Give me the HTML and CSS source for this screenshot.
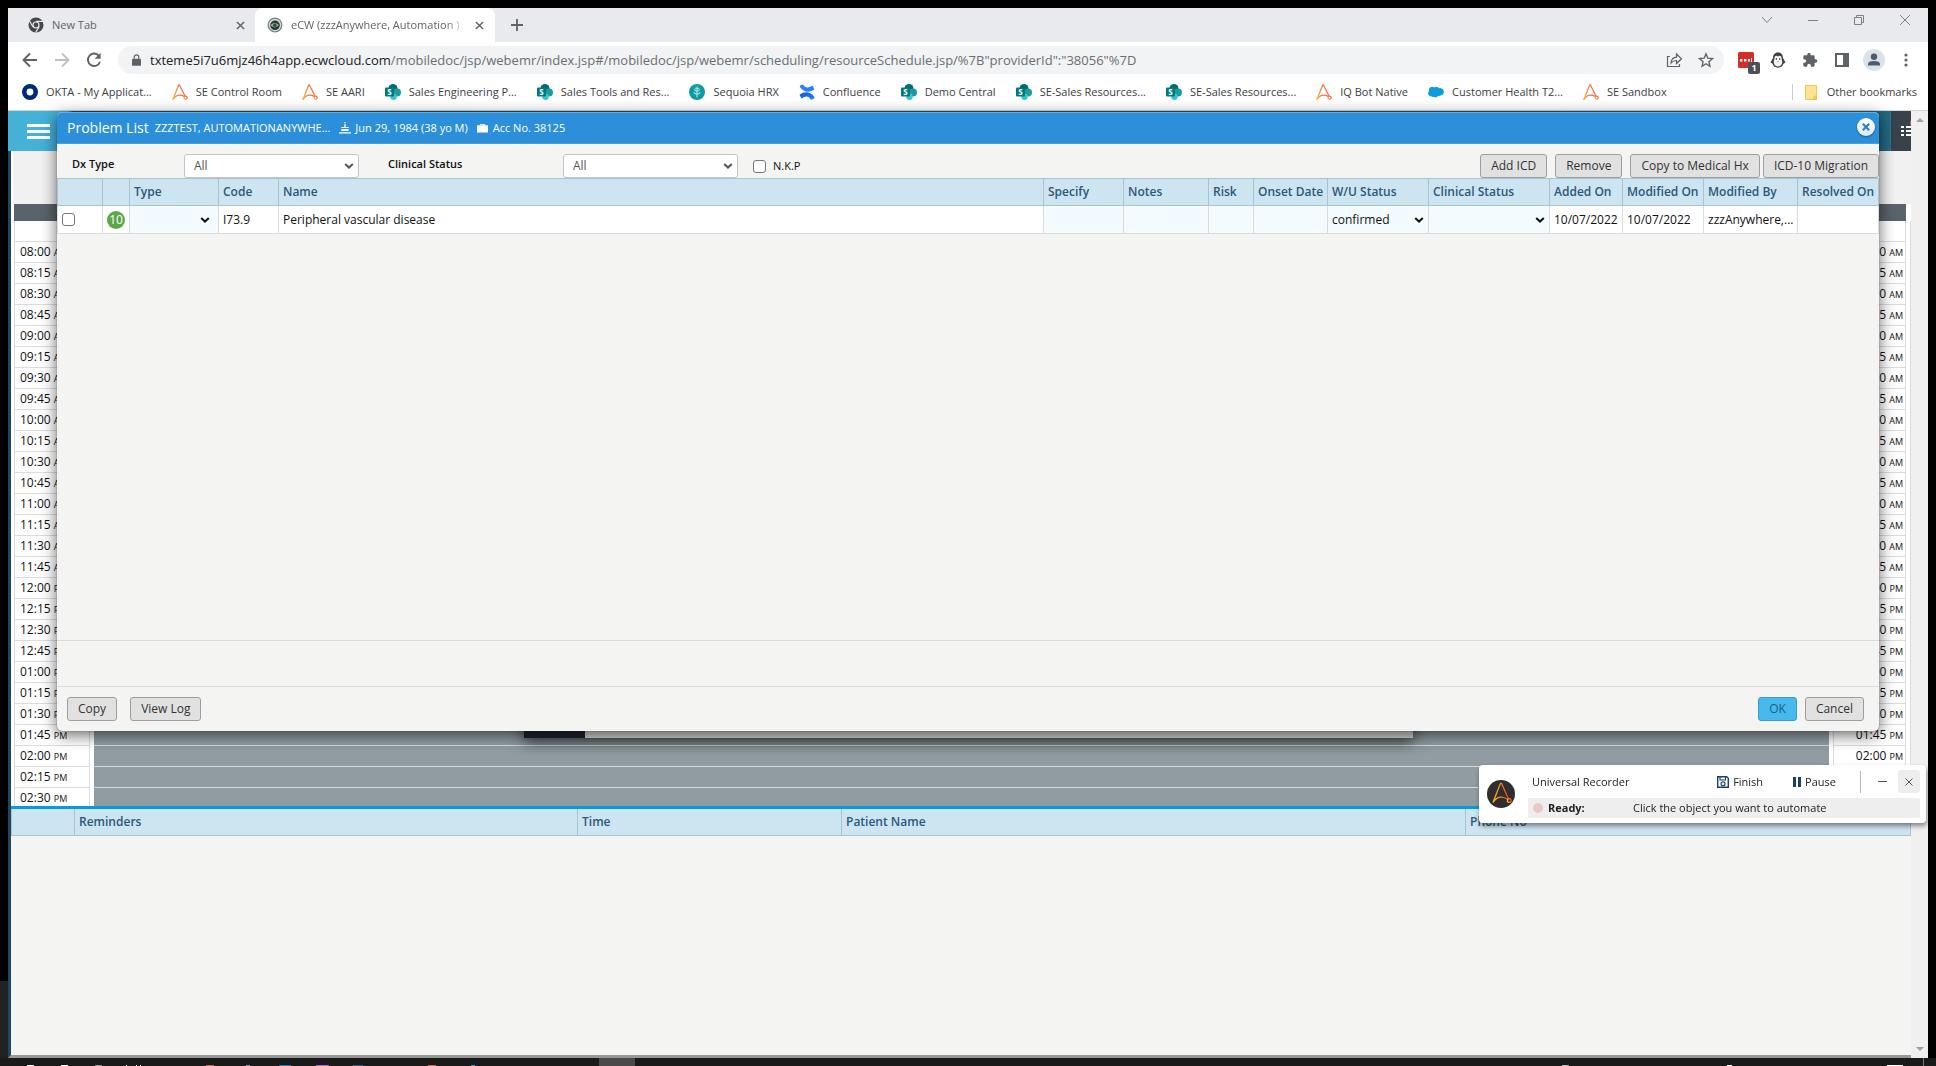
FILE: index.html
```html
<!DOCTYPE html>
<html lang="en">
<head>
<meta charset="utf-8">
<title>eCW (zzzAnywhere, Automation)</title>
<link rel="stylesheet" href="styles.css">
</head>
<body>
<svg class="sprite" aria-hidden="true">
  <linearGradient id="aa-grad" x1="0" y1="1" x2="1" y2="0.6"><stop offset="0" stop-color="#f9b934"/><stop offset="0.5" stop-color="#f58a4b"/><stop offset="1" stop-color="#ef6a4e"/></linearGradient>
  <linearGradient id="conf-grad" x1="0" y1="0" x2="1" y2="1"><stop offset="0" stop-color="#0d56cf"/><stop offset="1" stop-color="#2684ff"/></linearGradient>
  <symbol id="aa" viewBox="0 0 16 16"><g fill="none" stroke="url(#aa-grad)" stroke-width="1.3" stroke-linecap="round" stroke-linejoin="round"><path d="M1 15.2 6.6 1.2q.4-.9.9 0L13 12"/><path d="M1 15.2C3.600 11.500 7 9.600 12.200 12.400"/><circle cx="13.600" cy="13.700" r="1.500"/></g></symbol>
  <symbol id="chev" viewBox="0 0 10 6"><path d="m1.200 1 3.800 3.600L8.800 1" fill="none" stroke="currentColor" stroke-width="2"/></symbol>
  <symbol id="x" viewBox="0 0 10 10"><path d="m1 1 8 8M9 1 1 9" fill="none" stroke="currentColor" stroke-width="1.600"/></symbol>
</svg>

<div class="browser">
  <header class="tabs">
    <div class="tab">
      <svg class="i16" viewBox="0 0 16 16"><circle cx="8" cy="8" r="7.500" fill="#45494d"/><circle cx="8" cy="8" r="3.600" fill="#e8eaed"/><circle cx="8" cy="8" r="2.400" fill="#45494d"/><path d="M8 4.400h7M4.900 9.800 1.400 3.800M11.100 9.800 7.600 15.500" stroke="#e8eaed" stroke-width="1.200"/></svg>
      <span class="tab-title">New Tab</span>
      <button class="bare" aria-label="Close tab"><svg class="i9"><use href="#x"/></svg></button>
    </div>
    <div class="tab active">
      <svg class="i16" viewBox="0 0 16 16"><circle cx="8" cy="8" r="7.500" fill="#7b8287"/><circle cx="8" cy="8" r="6.200" fill="#d5d9d6"/><circle cx="8" cy="8.300" r="4.800" fill="#27363c"/><path d="M3.500 8.300Q7.500 3.500 12 8.300 7.500 12.500 3.500 8.300z" fill="#a9c75a"/><circle cx="7.800" cy="8.300" r="1.900" fill="#1e5277"/></svg>
      <span class="tab-title fade">eCW (zzzAnywhere, Automation )</span>
      <button class="bare" aria-label="Close tab"><svg class="i9"><use href="#x"/></svg></button>
    </div>
    <button class="bare new-tab" aria-label="New tab"><svg class="i12" viewBox="0 0 12 12"><path d="M6 0v12M0 6h12" stroke="currentColor" stroke-width="1.800"/></svg></button>
    <div class="win">
      <button class="bare" aria-label="Search tabs"><svg class="i12" viewBox="0 0 12 12"><path d="m1 3 5 5.500L11 3" fill="none" stroke="currentColor"/></svg></button>
      <button class="bare" aria-label="Minimize"><svg class="i12" viewBox="0 0 12 12"><path d="M1 6.500h10" stroke="currentColor"/></svg></button>
      <button class="bare" aria-label="Restore"><svg class="i12" viewBox="0 0 12 12"><path d="M1.500 3.500h7v7h-7zM3.500 3V1.500h7v7H9" fill="none" stroke="currentColor"/></svg></button>
      <button class="bare" aria-label="Close"><svg class="i12" viewBox="0 0 12 12"><path d="m1 1 10 10M11 1 1 11" stroke="currentColor"/></svg></button>
    </div>
  </header>

  <div class="toolbar">
    <button class="bare" aria-label="Back"><svg class="i16" viewBox="0 0 16 16"><path d="M15 8H2M8 1.500 1.500 8 8 14.500" fill="none" stroke="currentColor" stroke-width="1.900"/></svg></button>
    <button class="bare off" aria-label="Forward"><svg class="i16" viewBox="0 0 16 16"><path d="M1 8h13M8 1.500 14.500 8 8 14.500" fill="none" stroke="currentColor" stroke-width="1.900"/></svg></button>
    <button class="bare" aria-label="Reload"><svg class="i16" viewBox="0 0 16 16"><path d="M13.200 4.200A6.200 6.200 0 1 0 14 9.700" fill="none" stroke="currentColor" stroke-width="1.900"/><path d="M14.600.8v6h-6z" fill="currentColor"/></svg></button>
    <div class="omnibox">
      <svg class="lock" viewBox="0 0 10 13"><path d="M1 5h8q1 0 1 1v6q0 1-1 1H1q-1 0-1-1V6q0-1 1-1z" fill="currentColor"/><path d="M2.500 5V3.300a2.500 2.500 0 0 1 5 0V5" fill="none" stroke="currentColor" stroke-width="1.400"/></svg>
      <span class="url"><b>txteme5i7u6mjz46h4app.ecwcloud.com</b>/mobiledoc/jsp/webemr/index.jsp#/mobiledoc/jsp/webemr/scheduling/resourceSchedule.jsp/%7B"providerId":"38056"%7D</span>
      <svg class="i16" viewBox="0 0 16 16"><path d="M4 4.500H1.500v10h12V12M5 11q.5-5.500 5.500-5.800V2l5 4.800-5 4.700V8.500Q7 8.500 5 11z" fill="none" stroke="currentColor" stroke-width="1.200"/></svg>
      <svg class="i16" viewBox="0 0 16 16"><path d="m8 1.800 1.800 4.400 4.700.4-3.600 3.100 1.100 4.600L8 11.800l-4 2.500 1.100-4.600-3.600-3.100 4.700-.4z" fill="none" stroke="currentColor" stroke-width="1.300"/></svg>
    </div>
    <div class="exts">
      <span class="ext-red"><svg class="i16" viewBox="0 0 16 16"><rect width="16" height="16" rx="1.500" fill="#d32d27"/><path d="M2 7h2.400v2.400H2zM6 7h2.400v2.400H6zM10 7h1.800v2.400H10zM13 6h1v4h-1z" fill="#fff"/></svg><span class="badge">1</span></span>
      <svg class="i16" viewBox="0 0 16 16"><path d="M8 .5c3.600 0 5 2.500 5 5.500l2.500 4.500-1.800 1L12 14.500 8 15.700 4 14.500l-1.700-3-1.800-1L3 6C3 3 4.400.5 8 .5z" fill="#3c3f43"/><path d="M8 4.500C6 2.800 4 4.500 4.300 7.500 2.800 11 4.500 14.500 8 14.500s5.200-3.500 3.700-7C12 4.500 10 2.800 8 4.500z" fill="#f5f5f5"/><circle cx="6.300" cy="7" r=".7"/><circle cx="9.700" cy="7" r=".7"/><path d="M7 9h2l-1 1z" fill="#777"/></svg>
      <svg class="i16" viewBox="0 0 24 24"><path d="M20.500 11H19V7a2 2 0 0 0-2-2h-4V3.500a2.500 2.500 0 0 0-5 0V5H4a2 2 0 0 0-2 2v3.800h1.500a2.700 2.700 0 0 1 0 5.400H2V20a2 2 0 0 0 2 2h3.800v-1.500a2.700 2.700 0 0 1 5.400 0V22H17a2 2 0 0 0 2-2v-4h1.500a2.500 2.500 0 0 0 0-5z" fill="currentColor"/></svg>
      <svg class="i16" viewBox="0 0 16 16"><path d="M1 1h14v14H1zM3 3v10h6V3z" fill="currentColor" fill-rule="evenodd"/></svg>
      <svg class="i22" viewBox="0 0 22 22"><circle cx="11" cy="11" r="11" fill="#dde1e8"/><circle cx="11" cy="7.800" r="3.200" fill="#4f5b73"/><path d="M5 16.500V15q0-3 6-3t6 3v1.500z" fill="#4f5b73"/></svg>
      <svg class="dots" viewBox="0 0 4 16"><g fill="currentColor"><circle cx="2" cy="3" r="1.600"/><circle cx="2" cy="8" r="1.600"/><circle cx="2" cy="13" r="1.600"/></g></svg>
    </div>
  </div>

  <nav class="bookmarks">
    <a href="#"><svg class="i16" viewBox="0 0 16 16"><circle cx="8" cy="8" r="5.700" fill="none" stroke="#00297a" stroke-width="4.600"/></svg>OKTA - My Applicat...</a>
    <a href="#"><svg class="i16"><use href="#aa"/></svg>SE Control Room</a>
    <a href="#"><svg class="i16"><use href="#aa"/></svg>SE AARI</a>
    <a href="#"><svg class="i16" viewBox="0 0 16 16"><g id="sp"><circle cx="8" cy="4.500" r="4.500" fill="#036c70"/><circle cx="12" cy="8.500" r="4" fill="#1a9ba1"/><circle cx="8.500" cy="12.800" r="3.200" fill="#37c6d0"/><rect y="3.500" width="9" height="9" rx="1" fill="#03787c"/><text x="4.500" y="10.800" text-anchor="middle" class="sp-letter">S</text></g></svg>Sales Engineering P...</a>
    <a href="#"><svg class="i16"><use href="#sp"/></svg>Sales Tools and Res...</a>
    <a href="#"><svg class="i16" viewBox="0 0 16 16"><circle cx="8" cy="8" r="8" fill="#0d9aa3"/><path d="M8 2.500v11M5 5.500l3 2 3-2M4.500 8.500l3.500 2 3.500-2M6 4l2 1 2-1" fill="none" stroke="#9fe0e0" stroke-width="1.200"/></svg>Sequoia HRX</a>
    <a href="#"><svg class="i16" viewBox="0 0 16 16"><path d="M1 1.500 4 .5q3 5.500 9.500 1L15.500 5.500Q7 11 .8 3z" fill="#2684ff"/><path d="M15.200 14.500 12 15.700Q9 10 2.500 14.500L.5 10.800Q9 5 15.500 13z" fill="url(#conf-grad)"/></svg>Confluence</a>
    <a href="#"><svg class="i16"><use href="#sp"/></svg>Demo Central</a>
    <a href="#"><svg class="i16"><use href="#sp"/></svg>SE-Sales Resources...</a>
    <a href="#"><svg class="i16"><use href="#sp"/></svg>SE-Sales Resources...</a>
    <a href="#"><svg class="i16"><use href="#aa"/></svg>IQ Bot Native</a>
    <a href="#"><svg class="i16" viewBox="0 0 16 16"><path d="M3.500 12.500A3.300 3.300 0 0 1 1 7a3.500 3.500 0 0 1 5.500-3.600A3.500 3.500 0 0 1 11 4.300 3.700 3.700 0 1 1 12 11.500q-1 .8-2 .5-1.800 2.400-4 .8-1.500.5-2.500-.3z" fill="#0b9ddb"/></svg>Customer Health T2...</a>
    <a href="#"><svg class="i16"><use href="#aa"/></svg>SE Sandbox</a>
    <a href="#" class="other"><svg class="folder" viewBox="0 0 12 15"><path d="M.5.500h11v9.500l-1 1.500v3H.5z" fill="#fde293" stroke="#f0cc4e"/><path d="M9 14.500v-2.500l2.500-1.500v4z" fill="#f6d566" stroke="#e2b93a" stroke-width=".8"/></svg>Other bookmarks</a>
  </nav>

  <main class="app">
    <div class="page">
      <div class="menubar">
        <button class="bare burger" aria-label="Menu"><i></i><i></i><i></i></button>
        <div class="menu-list"><svg viewBox="0 0 16 20"><circle cx="15" cy="4" r="6" fill="#e8533f"/><path d="M0 8h3M0 12h3M0 16h3M5 8h11M5 12h11M5 16h11" stroke="#fff" stroke-width="2"/></svg></div>
      </div>
      <div class="content">
        <div class="sched-head"></div>
        <div class="sched">
          <div class="sched-band"></div>
          <ul class="times">
            <li></li>
            <li>08:00 <small>AM</small></li><li>08:15 <small>AM</small></li><li>08:30 <small>AM</small></li><li>08:45 <small>AM</small></li>
            <li>09:00 <small>AM</small></li><li>09:15 <small>AM</small></li><li>09:30 <small>AM</small></li><li>09:45 <small>AM</small></li>
            <li>10:00 <small>AM</small></li><li>10:15 <small>AM</small></li><li>10:30 <small>AM</small></li><li>10:45 <small>AM</small></li>
            <li>11:00 <small>AM</small></li><li>11:15 <small>AM</small></li><li>11:30 <small>AM</small></li><li>11:45 <small>AM</small></li>
            <li>12:00 <small>PM</small></li><li>12:15 <small>PM</small></li><li>12:30 <small>PM</small></li><li>12:45 <small>PM</small></li>
            <li>01:00 <small>PM</small></li><li>01:15 <small>PM</small></li><li>01:30 <small>PM</small></li><li>01:45 <small>PM</small></li>
            <li>02:00 <small>PM</small></li><li>02:15 <small>PM</small></li><li>02:30 <small>PM</small></li>
          </ul>
          <div class="slots"></div>
          <ul class="times right">
            <li></li>
            <li>08:00 <small>AM</small></li><li>08:15 <small>AM</small></li><li>08:30 <small>AM</small></li><li>08:45 <small>AM</small></li>
            <li>09:00 <small>AM</small></li><li>09:15 <small>AM</small></li><li>09:30 <small>AM</small></li><li>09:45 <small>AM</small></li>
            <li>10:00 <small>AM</small></li><li>10:15 <small>AM</small></li><li>10:30 <small>AM</small></li><li>10:45 <small>AM</small></li>
            <li>11:00 <small>AM</small></li><li>11:15 <small>AM</small></li><li>11:30 <small>AM</small></li><li>11:45 <small>AM</small></li>
            <li>12:00 <small>PM</small></li><li>12:15 <small>PM</small></li><li>12:30 <small>PM</small></li><li>12:45 <small>PM</small></li>
            <li>01:00 <small>PM</small></li><li>01:15 <small>PM</small></li><li>01:30 <small>PM</small></li><li>01:45 <small>PM</small></li>
            <li>02:00 <small>PM</small></li><li>02:15 <small>PM</small></li><li>02:30 <small>PM</small></li>
          </ul>
          <div class="edge"></div>
        </div>
        <table class="grid reminders">
          <colgroup><col class="r1"><col class="r2"><col class="r3"><col class="r4"><col></colgroup>
          <thead><tr><th></th><th>Reminders</th><th>Time</th><th>Patient Name</th><th>Phone No</th></tr></thead>
        </table>
        <div class="fill"></div>
      </div>
    </div>
    <div class="scroll"><i class="up"></i><i class="down"></i></div>

    <div class="under"></div>

    <section class="dialog" role="dialog" aria-label="Problem List">
      <header class="dlg-head">
        <h1>Problem List</h1>
        <span>ZZZTEST, AUTOMATIONANYWHE...</span>
        <svg class="cake" viewBox="0 0 12 12"><path d="M5.300 0h1.400v1.300H5.300zM5.300 2.300h1.400V5h3v1H2.300V5h3zM2.300 7h7.400v2H2.300zM0 10.200h12v1.400H0z" fill="#fff"/></svg>
        <span>Jun 29, 1984 (38 yo M)</span>
        <svg class="case" viewBox="0 0 12 10"><path d="M3.500 2V.5h5V2H12v8H0V2zm1 0h3v-.6h-3z" fill="#fff"/></svg>
        <span>Acc No. 38125</span>
        <button class="dlg-close" aria-label="Close"><svg class="i8" viewBox="0 0 10 10"><path d="m1 1 8 8M9 1 1 9" stroke="#2a7fc4" stroke-width="2.600"/></svg></button>
      </header>
      <div class="filters">
        <label class="lbl" for="dx">Dx Type</label>
        <span class="pick dx"><select id="dx"><option>All</option></select><svg><use href="#chev"/></svg></span>
        <label class="lbl" for="cs">Clinical Status</label>
        <span class="pick cs"><select id="cs"><option>All</option></select><svg><use href="#chev"/></svg></span>
        <label class="nkp"><input type="checkbox">N.K.P</label>
        <div class="acts">
          <button class="btn">Add ICD</button>
          <button class="btn">Remove</button>
          <span class="pair"><button class="btn">Copy to Medical Hx</button><button class="btn">ICD-10 Migration</button></span>
        </div>
      </div>
      <table class="grid problems">
        <colgroup><col class="p1"><col class="p2"><col class="p3"><col class="p4"><col><col class="p6"><col class="p7"><col class="p8"><col class="p9"><col class="p10"><col class="p11"><col class="p12"><col class="p13"><col class="p14"><col class="p15"></colgroup>
        <thead><tr><th></th><th></th><th>Type</th><th>Code</th><th>Name</th><th>Specify</th><th>Notes</th><th>Risk</th><th>Onset Date</th><th>W/U Status</th><th>Clinical Status</th><th>Added On</th><th>Modified On</th><th>Modified By</th><th>Resolved On</th></tr></thead>
        <tbody><tr>
          <td><input type="checkbox" aria-label="Select row"></td>
          <td class="mid"><span class="ten">10</span></td>
          <td class="edit type"><span class="pick"><select aria-label="Type"><option></option></select><svg><use href="#chev"/></svg></span></td>
          <td>I73.9</td>
          <td>Peripheral vascular disease</td>
          <td class="edit"></td><td class="edit"></td><td class="edit"></td><td class="edit"></td>
          <td class="edit"><span class="pick"><select aria-label="W/U Status"><option>confirmed</option></select><svg><use href="#chev"/></svg></span></td>
          <td class="edit"><span class="pick"><select aria-label="Clinical Status"><option></option></select><svg><use href="#chev"/></svg></span></td>
          <td>10/07/2022</td><td>10/07/2022</td><td>zzzAnywhere,...</td><td></td>
        </tr></tbody>
      </table>
      <div class="dlg-body"></div>
      <div class="dlg-note"></div>
      <footer class="dlg-foot">
        <button class="btn">Copy</button><button class="btn">View Log</button>
        <button class="btn ok">OK</button><button class="btn">Cancel</button>
      </footer>
    </section>
  </main>
</div>

<aside class="recorder">
  <svg class="rec-logo" viewBox="0 0 28 28"><linearGradient id="rec-grad" x1="0" y1="0" x2="1" y2="0"><stop offset="0" stop-color="#f5c211"/><stop offset="0.5" stop-color="#f08424"/><stop offset="1" stop-color="#e8452a"/></linearGradient><circle cx="14" cy="14" r="14" fill="#2e2e2e"/><g fill="none" stroke="url(#rec-grad)" stroke-width="1.300" stroke-linejoin="round"><path d="M6 22.500 13.200 4q.8-1.500 1.600 0L21.500 19M6 22.500Q12 13.500 21 19.500"/><circle cx="22.300" cy="20.500" r="1.900"/></g></svg>
  <div class="rec-main">
    <div class="rec-top">
      <span class="rec-title">Universal Recorder</span>
      <button class="bare rec-btn finish"><svg class="i12" viewBox="0 0 12 12"><path d="M.7.700h9l1.600 1.600v9H.7z" fill="none" stroke="#1b3f6b" stroke-width="1.400"/><path d="M3 1v3h5.500V1" fill="none" stroke="#1b3f6b" stroke-width="1.100"/><circle cx="6" cy="7.800" r="2" fill="none" stroke="#1b3f6b" stroke-width="1.200"/></svg>Finish</button>
      <button class="bare rec-btn"><svg class="pause" viewBox="0 0 8 10"><path d="M0 0h3v10H0zM5 0h3v10H5z" fill="#1b3f6b"/></svg>Pause</button>
      <i class="rec-sep"></i>
      <button class="bare rec-win" aria-label="Minimize"><svg class="i9" viewBox="0 0 9 9"><path d="M0 4.500h9" stroke="currentColor"/></svg></button>
      <button class="bare rec-win on" aria-label="Close"><svg class="i8" viewBox="0 0 8 8"><path d="m.5.5 7 7M7.500.500l-7 7" stroke="currentColor"/></svg></button>
    </div>
    <div class="rec-status"><i></i><b>Ready:</b><span>Click the object you want to automate</span></div>
  </div>
</aside>

<div class="taskbar">
  <svg width="640" height="8" viewBox="0 0 640 8"><rect x="599" width="36" height="8" fill="#4a4a4a"/><g fill="#fff"><path d="M27 7h7v1h-7zM61 7h7v1h-7zM126 7h1v1h-1zM136 7h1v1h-1zM140 7h1v1h-1z"/></g><path d="M95 7h7v1h-7z" fill="#999"/><path d="M206 7h8v1h-8z" fill="#e0503a"/><path d="M246 7h4v1h-4z" fill="#8d84d8"/><path d="M279 7h12v1h-12z" fill="#1279b8"/><path d="M316 7h13v1h-13z" fill="#b668e0"/><path d="M353 7h10v1h-10z" fill="#3a5f9a"/><path d="M428 7h8v1h-8z" fill="#e2703a"/><path d="M471 7h4v1h-4z" fill="#34a4e4"/></svg>
  <svg width="536" height="8" viewBox="0 0 536 8"><path d="M162 7h7v1h-7z" fill="#a9bccb"/><path d="M327 7h5v1h-5zM487 7h16v1h-16z" fill="#fff"/><path d="M523 0h1v8h-1z" fill="#777"/></svg>
</div>
</body>
</html>
```
FILE: styles.css
```css
* { box-sizing: border-box; }
body {
  margin: 0;
  height: 100vh;
  overflow: hidden;
  display: flex;
  flex-direction: column;
  background: linear-gradient(#000 0, #000 92%, #222 92%, #222 100%);
  font: 12px/16px "Open Sans", "Noto Sans", sans-serif;
  color: #111;
}
button, select, input { font: inherit; color: inherit; margin: 0; }
a { color: inherit; text-decoration: none; }
svg { display: block; flex: none; }
.sprite { position: absolute; width: 0; height: 0; }
.sp-letter { font: bold 8px "Open Sans", sans-serif; fill: #fff; }
.bare { border: 0; padding: 0; background: none; display: flex; align-items: center; }
.i8 { width: 8px; height: 8px; }
.i9 { width: 9px; height: 9px; }
.i12 { width: 12px; height: 12px; }
.i16 { width: 16px; height: 16px; }
.i22 { width: 22px; height: 22px; }

.browser { flex: 1; min-height: 0; margin: 8px 8px 0; display: flex; flex-direction: column; background: #fff; box-shadow: 8px 0 #000; }

/* browser frame */
.tabs { display: flex; height: 34px; background: #e8eaed; color: #5f6368; font-size: 11px; }
.tab { display: flex; align-items: center; gap: 8px; width: 247px; padding: 0 10px 0 20px; }
.tab.active { width: 240px; background: #fff; border-radius: 8px 8px 0 0; padding: 0 11px 0 12px; }
.tab-title { flex: 1; white-space: nowrap; overflow: hidden; }
.fade { -webkit-mask-image: linear-gradient(90deg, #000 88%, transparent); mask-image: linear-gradient(90deg, #000 88%, transparent); }
.new-tab { margin-left: 16px; }
.win { margin: 0 17px 10px auto; display: flex; gap: 34px; color: #7d8084; }
.toolbar { display: flex; align-items: center; height: 36px; padding: 0 20px 0 14px; gap: 16px; color: #5f6368; }
.off { color: #bdc1c6; }
.omnibox { flex: 1; display: flex; align-items: center; height: 28px; gap: 16px; margin-right: -2px; padding: 0 10px 0 14px; background: #f1f3f4; border-radius: 14px; }
.lock { width: 9px; height: 12px; }
.url { flex: 1; font-size: 13px; color: #6b6f73; white-space: nowrap; overflow: hidden; margin-left: -7px; }
.url b { font-weight: 400; color: #202124; }
.exts { display: flex; align-items: center; gap: 16px; }
.exts .i22 { margin: 0 -3px; }
.dots { width: 4px; height: 16px; margin: 0 0 0 6px; }
.ext-red { position: relative; }
.badge { position: absolute; left: 10px; top: 10px; width: 12px; height: 12px; border-radius: 2px; background: #4d5156; color: #fff; font: bold 9px/12px "Open Sans", sans-serif; text-align: center; }
.bookmarks { display: flex; align-items: center; gap: 20px; height: 33px; padding: 0 11px 4px 14px; border-bottom: 1px solid #d6d6d6; font-size: 11px; color: #3c4043; white-space: nowrap; }
.bookmarks a { display: flex; align-items: center; gap: 8px; }
.bookmarks .other { margin-left: auto; padding-left: 12px; border-left: 1px solid #ccc; gap: 10px; }
.folder { width: 12px; height: 15px; }

/* application page */
.app { position: relative; flex: 1; min-height: 0; display: flex; }
.page { flex: 1; min-width: 0; display: flex; flex-direction: column; }
.menubar { display: flex; justify-content: space-between; height: 40px; background: linear-gradient(90deg, #45b1d7 0, #45b1d7 60px, #1c4a66 65px, #1f5f78 98%, #2b7b92 100%); }
.burger { flex-direction: column; justify-content: center; gap: 3px; margin-left: 19px; }
.burger i { width: 23px; height: 3px; background: #fff; }
.menu-list { width: 21px; background: #37424a; border-left: 1px solid #2b6d9b; padding: 8px 0 0 10px; overflow: hidden; }
.menu-list svg { width: 16px; height: 20px; }
.content { flex: 1; min-height: 0; display: flex; flex-direction: column; border-left: 3px solid #1f4762; border-bottom: 3px solid #989898; background: #f4f4f3; }
.sched-head { height: 53px; background: #f1f1f1; border-left: 2px solid #fff; }
.sched { display: grid; grid-template-columns: 76px 1fr 73px 1px; grid-template-rows: 17px 585px; column-gap: 4px; padding-left: 3px; background: #fff; overflow: hidden; }
.sched-band { grid-column: 1 / 4; background: #5a636a; }
.times, .slots, .edge { grid-row: 2; overflow: hidden; }
.edge { background: #dcdcdc; }
.slots { background: repeating-linear-gradient(#909ca1 0, #909ca1 20px, #d0dcdf 20px, #d0dcdf 21px); }
.times { list-style: none; margin: 0; padding: 0; border: solid #dcdcdc; border-width: 0 1px; }
.times li { height: 21px; padding-left: 5px; line-height: 20px; border-bottom: 1px solid #dcdcdc; white-space: nowrap; }
.times small { font-size: 9px; }
.times.right li { text-align: right; padding-right: 2px; }
.grid { width: 100%; table-layout: fixed; border-collapse: collapse; }
.grid th { height: 27px; padding: 0 4px; text-align: left; font-weight: 600; color: #2b587c; background: #cde5f1; border: 1px solid #a9c3d2; white-space: nowrap; }
.reminders { border-top: 3px solid #049cdf; }
.reminders th { height: 28px; }
.r1 { width: 63px; } .r2 { width: 503px; } .r3 { width: 264px; } .r4 { width: 624px; }
.scroll { width: 17px; background: #f0f0f1; display: flex; flex-direction: column; justify-content: space-between; align-items: center; padding: 7px 0; }
.scroll i { border: 4px solid transparent; }
.scroll .up { border-top: 0; border-bottom-color: #a0a0a0; }
.scroll .down { border-bottom: 0; border-top-color: #a0a0a0; }

.under { position: absolute; left: 516px; right: 515px; top: 500px; height: 127px; background: linear-gradient(90deg, #20242f 61px, #d4d4d1 61px); box-shadow: 0 4px 14px rgba(0,0,0,.6); }

/* problem list dialog */
.dialog { position: absolute; left: 49px; right: 49px; top: 1px; background: #f4f4f2; border-radius: 5px; box-shadow: 0 4px 16px rgba(0,0,0,.6), 0 0 1px #444; }
.dlg-head { display: flex; align-items: center; height: 32px; padding: 0 4px 0 10px; color: #fff; background: #2b90d9; border-top: 1px solid #5fb0e6; border-bottom: 1px solid #4a9fd6; border-radius: 5px 5px 0 0; font-size: 11px; font-weight: 500; white-space: nowrap; }
.dlg-head h1 { margin: 0 6px 0 0; font-size: 14px; font-weight: 400; }
.cake { width: 12px; height: 12px; margin: 0 4px 0 9px; }
.case { width: 11px; height: 10px; margin: 0 5px 0 9px; }
.dlg-close { margin: 0 0 2px auto; width: 18px; height: 18px; border: 0; border-radius: 50%; padding: 0; display: grid; place-items: center; background: linear-gradient(#fff, #dfe6ea); box-shadow: 0 1px 2px rgba(0,0,0,.4); }
.filters { display: flex; align-items: flex-start; height: 34px; padding: 10px 0 0 15px; }
.lbl { font-size: 11px; font-weight: 600; line-height: 20px; }
.pick { position: relative; display: block; }
.pick select { appearance: none; width: 100%; height: 24px; border: 0; padding: 0; background: transparent; }
.pick svg { position: absolute; right: 5px; top: 9px; width: 10px; height: 6px; pointer-events: none; }
.filters .pick { color: #555; width: 175px; }
.filters select { border: 1px solid #c4c4c4; border-radius: 3px; background: #fff; padding: 0 9px; }
.filters .lbl { width: 112px; }
.filters .pick.dx { margin-right: 29px; }
.filters .lbl[for="cs"] { width: 175px; }
.nkp { display: flex; align-items: center; gap: 7px; height: 24px; margin-left: 15px; font-size: 11px; }
input[type="checkbox"] { appearance: none; display: block; width: 13px; height: 13px; border: 1px solid #767676; border-radius: 3px; background: #fff; }
.acts { display: flex; gap: 8px; margin-left: auto; }
.pair { display: flex; gap: 3px; }
.btn { height: 24px; padding: 0 10px; border: 1px solid #9e9e9e; border-radius: 3px; background: #e1e1e1; color: #333; white-space: nowrap; }
.problems td { height: 28px; padding: 0 4px; background: #fff; border: 1px solid #d9dcde; white-space: nowrap; }
.problems td.edit { background: #f3fbfe; }
.problems td.type { padding-right: 8px; }
.problems td.mid { padding: 0; }
.ten { display: block; width: 18px; height: 18px; margin: 0 auto; border-radius: 50%; background: #5aa946; color: #fff; line-height: 18px; text-align: center; }
.problems .pick svg { right: 0; }
.p1 { width: 45px; } .p2 { width: 27px; } .p3 { width: 89px; } .p4 { width: 60px; }
.p6 { width: 80px; } .p7 { width: 85px; } .p8 { width: 45px; } .p9 { width: 74px; } .p10 { width: 101px; }
.p11 { width: 121px; } .p12 { width: 73px; } .p13 { width: 81px; } .p14 { width: 94px; } .p15 { width: 81px; }
.dlg-body { height: 406px; }
.dlg-note { height: 47px; border: solid #dcdcda; border-width: 1px 0; }
.dlg-foot { display: flex; align-items: center; height: 44px; padding: 0 15px 0 10px; }
.dlg-foot .btn { margin-right: 13px; }
.dlg-foot .btn.ok { margin: 0 8px 0 auto; background: #48b9ec; border-color: #3a9cc8; color: #15608a; }
.dlg-foot .btn:last-child { margin-right: 0; }

/* recorder window */
.recorder { position: fixed; right: 10px; top: 765px; width: 447px; height: 58px; display: flex; align-items: center; gap: 13px; padding: 5px 6px 5px 8px; background: #fff; border-radius: 4px; box-shadow: 1px 3px 5px rgba(0,0,0,.45); font-size: 11px; color: #222; }
.rec-logo { width: 28px; height: 28px; }
.rec-main { flex: 1; }
.rec-top { display: flex; align-items: center; height: 23px; margin-bottom: 5px; }
.rec-title { flex: 1; padding-left: 4px; }
.rec-btn { gap: 4px; }
.finish { margin-right: 30px; }
.pause { width: 8px; height: 10px; }
.rec-sep { width: 1px; height: 22px; margin: 0 10px 0 24px; background: #bbb; }
.rec-win { width: 22px; height: 23px; justify-content: center; color: #555; }
.rec-win.on { margin-left: 5px; background: #ededed; border-radius: 3px; }
.rec-status { display: flex; align-items: center; height: 20px; padding-left: 5px; background: #eee; }
.rec-status i { width: 10px; height: 10px; border-radius: 50%; background: #ecc8c2; margin-right: 5px; }
.rec-status b { width: 85px; }

.taskbar { display: flex; justify-content: space-between; height: 8px; background: #1b1a1a; }
```
